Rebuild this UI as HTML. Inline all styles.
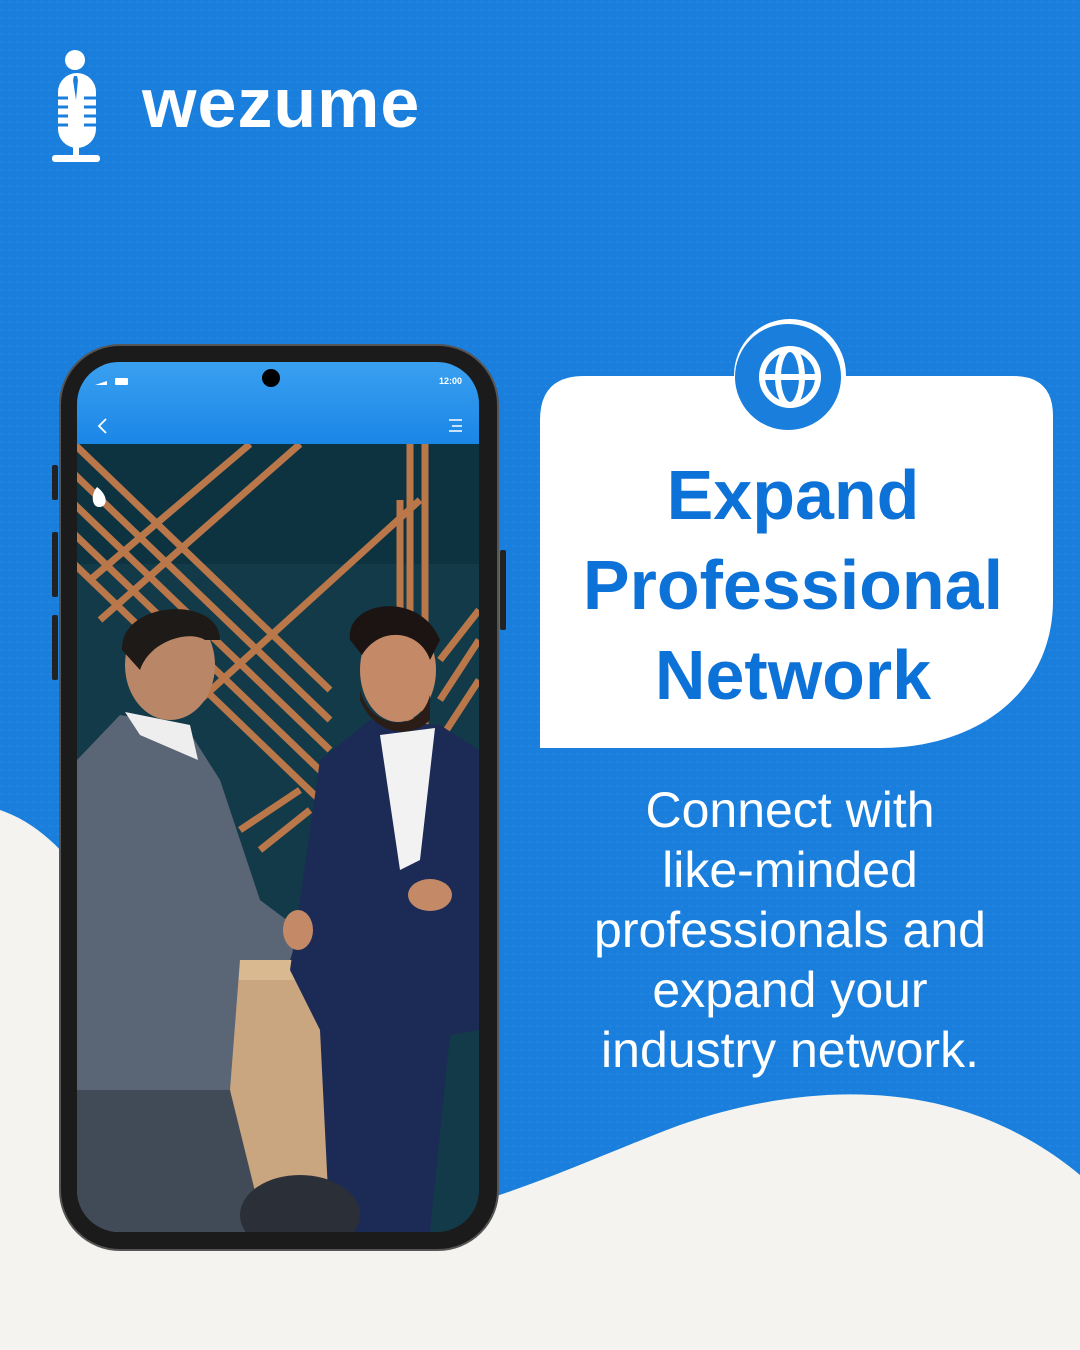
<!DOCTYPE html>
<html><head><meta charset="utf-8"><style>
html,body{margin:0;padding:0}
body{width:1080px;height:1350px;position:relative;overflow:hidden;background:#1a7fdc;font-family:"Liberation Sans",sans-serif}
.abs{position:absolute}
</style></head><body>
<svg class="abs" style="left:0;top:0" width="1080" height="1350">
<defs>
<pattern id="dots" width="8" height="8" patternUnits="userSpaceOnUse"><circle cx="2" cy="2" r="0.9" fill="#2a8ae2"/></pattern>
<linearGradient id="hd" x1="0" y1="0" x2="0" y2="1"><stop offset="0" stop-color="#3aa0f0"/><stop offset="1" stop-color="#1a86e6"/></linearGradient>
<clipPath id="scr"><rect x="77" y="362" width="402" height="870" rx="42"/></clipPath>
</defs>
<rect width="1080" height="1350" fill="#1a7fdc"/>
<rect width="1080" height="1350" fill="url(#dots)"/>
<path d="M0 810 C60 830 110 900 140 1000 L300 1230 C450 1230 560 1170 680 1125 C780 1090 880 1085 960 1110 C1010 1125 1050 1150 1080 1175 L1080 1350 L0 1350Z" fill="#f4f3ef"/>
<!-- phone -->
<rect x="52" y="465" width="6" height="35" rx="2" fill="#222"/>
<rect x="52" y="532" width="6" height="65" rx="2" fill="#222"/>
<rect x="52" y="615" width="6" height="65" rx="2" fill="#222"/>
<rect x="500" y="550" width="6" height="80" rx="2" fill="#222"/>
<rect x="60" y="345" width="438" height="905" rx="60" fill="#1b1b1b" stroke="#555" stroke-width="2"/>
<g clip-path="url(#scr)">
<rect x="77" y="362" width="402" height="870" fill="#123a48"/>
<rect x="77" y="444" width="402" height="120" fill="#0e3340"/>
<g stroke="#b9774a" stroke-width="7">
<path d="M70 470 L330 720 M70 500 L330 750 M70 530 L330 780 M70 560 L330 810 M70 440 L330 690"/>
<path d="M90 580 L250 444 M100 620 L300 444 M200 700 L420 500"/>
<path d="M410 444 L410 800 M425 444 L425 800 M400 500 L400 720"/>
<path d="M440 700 L479 640 M440 740 L479 680 M440 660 L479 610"/>
<path d="M240 830 L300 790 M260 850 L310 810"/>
</g>
<rect x="220" y="960" width="200" height="272" fill="#c9a67f"/>
<rect x="220" y="960" width="200" height="20" fill="#d9b98f"/>
<path d="M77 760 L120 715 L185 725 L220 780 L260 900 L300 930 L290 960 L240 960 L230 1090 L250 1232 L77 1232Z" fill="#5a6676"/>
<path d="M77 1090 L230 1090 L265 1232 L77 1232Z" fill="#414b57"/>
<ellipse cx="170" cy="665" rx="45" ry="55" fill="#b98767"/>
<path d="M122 650 C120 600 220 595 220 640 L205 640 C190 630 150 640 140 670Z" fill="#1e1a18"/>
<path d="M125 712 L190 725 L198 760 L140 735Z" fill="#eee"/>
<path d="M290 970 L320 760 L370 720 L440 725 L479 750 L479 1030 L450 1035 L430 1232 L330 1232 L320 1030Z" fill="#1c2b55"/>
<path d="M380 735 L435 728 L420 860 L400 870Z" fill="#f2f2f2"/>
<ellipse cx="398" cy="670" rx="38" ry="52" fill="#c48a68"/>
<path d="M360 690 C370 730 420 735 430 695 L430 720 C410 740 375 735 360 700Z" fill="#2a1c16"/>
<path d="M350 640 C345 600 420 590 440 640 L430 660 C420 630 380 625 362 655Z" fill="#1c1412"/>
<ellipse cx="430" cy="895" rx="22" ry="16" fill="#c48a68"/>
<ellipse cx="298" cy="930" rx="15" ry="20" fill="#c48a68"/>
<ellipse cx="300" cy="1215" rx="60" ry="40" fill="#2b3038"/>
<rect x="77" y="362" width="402" height="82" fill="url(#hd)"/>
<circle cx="271" cy="378" r="9" fill="#000"/>
<path d="M95 385 L107 381 L107 385Z" fill="#fff"/>
<rect x="115" y="378" width="13" height="7" rx="1" fill="#fff"/>
<text x="462" y="384" font-size="9" font-weight="bold" fill="#fff" text-anchor="end">12:00</text>
<path d="M106 419 L99 426 L106 433" stroke="#fff" stroke-width="1.8" fill="none"/>
<path d="M449 420 H462 M452 426 H462 M449 431 H462" stroke="#fff" stroke-width="1.5"/>
<path d="M97 487 C90 495 92 508 100 507 C108 506 108 495 97 487Z" fill="#fff"/>
</g>
<!-- card -->
<path d="M540 420 Q540 376 584 376 L1013 376 Q1053 376 1053 416 L1053 600 C1053 690 980 748 880 748 L540 748Z" fill="#fff"/>
<circle cx="790" cy="375" r="56" fill="#fff"/>
<circle cx="788" cy="377" r="53" fill="#1a7fdc"/>
<g fill="none" stroke="#fff" stroke-width="6">
<circle cx="790" cy="377" r="28"/>
<ellipse cx="790" cy="377" rx="12" ry="28"/>
<path d="M762 377 H818"/>
</g>
<!-- logo -->
<circle cx="75" cy="60" r="10" fill="#fff"/>
<rect x="58" y="73" width="38" height="75" rx="19" fill="#fff"/>
<g stroke="#1a7fdc" stroke-width="3"><path d="M56 98 H68 M56 107 H68 M56 116 H68 M56 125 H68 M84 98 H98 M84 107 H98 M84 116 H98 M84 125 H98"/></g>
<path d="M74 76 L77 76 L78 80 L76 100 L73 80Z" fill="#1a7fdc"/>
<rect x="73" y="145" width="6" height="12" fill="#fff"/>
<rect x="52" y="155" width="48" height="7" rx="3" fill="#fff"/>
<text x="142" y="127" font-size="70" font-weight="bold" fill="#fff" letter-spacing="1">wezume</text>
<g font-weight="bold" fill="#0d72d8" text-anchor="middle" font-size="70">
<text x="793" y="519">Expand</text>
<text x="793" y="609">Professional</text>
<text x="793" y="699">Network</text>
</g>
<g fill="#fff" text-anchor="middle" font-size="50">
<text x="790" y="827">Connect with</text>
<text x="790" y="887">like-minded</text>
<text x="790" y="947">professionals and</text>
<text x="790" y="1007">expand your</text>
<text x="790" y="1067">industry network.</text>
</g>
</svg>
</body></html>
